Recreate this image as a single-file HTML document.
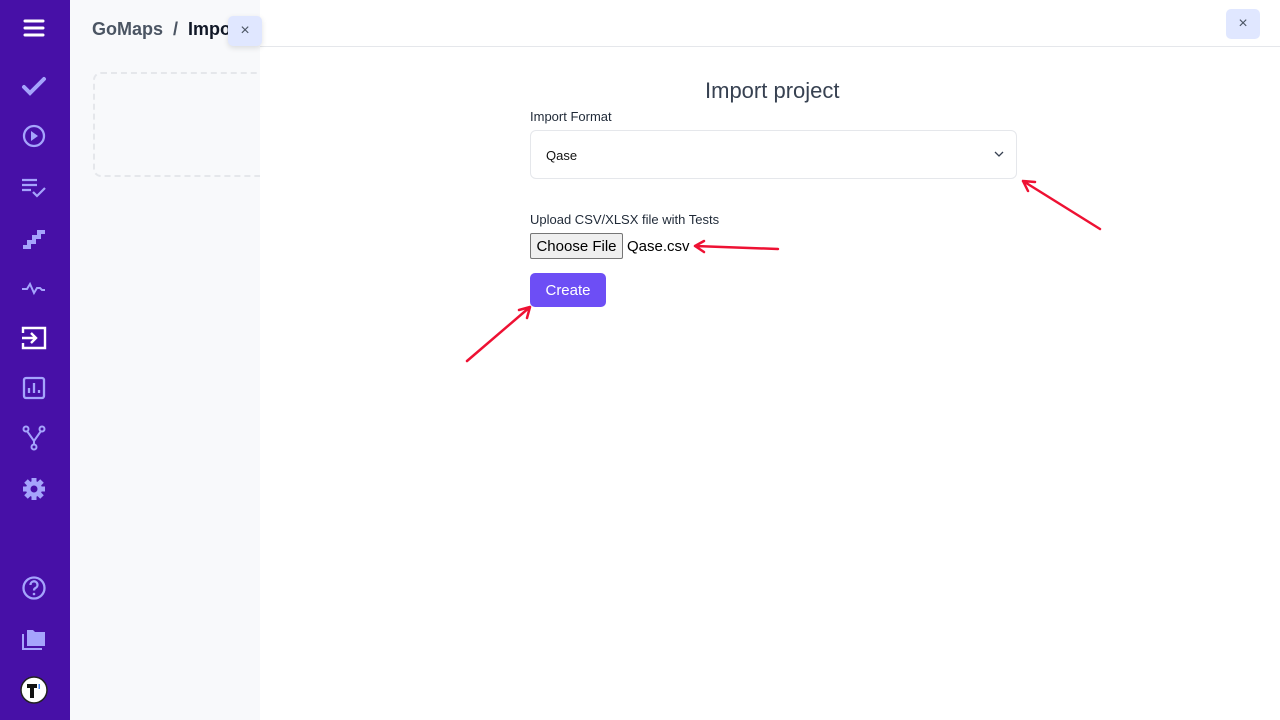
<!DOCTYPE html>
<html><head><meta charset="utf-8"><style>
*{box-sizing:border-box;margin:0;padding:0}
body{width:1280px;height:720px;overflow:hidden;background:#fff;font-family:"Liberation Sans",Arial,sans-serif;position:relative}
.sb{position:absolute;left:0;top:0;width:70px;height:720px;background:#4710a7}
.sb svg{position:absolute;left:21px;width:26px;height:26px}
.lp{position:absolute;left:70px;top:0;width:190px;height:720px;background:#f8f9fb}
.crumb{position:absolute;left:92px;top:19px;font-size:18px;font-weight:bold;color:#4b5563;white-space:nowrap;width:140px;overflow:hidden}
.crumb b{color:#111827}
.dash{position:absolute;left:93px;top:72px;width:175px;height:105px;border:2px dashed #e5e7eb;border-radius:8px}
.main{position:absolute;left:260px;top:0;width:1020px;height:720px;background:#fff}
.hline{position:absolute;left:260px;top:46px;width:1020px;height:1px;background:#e5e7eb}
.xbtn{position:absolute;width:34px;height:30px;background:#e0e7ff;border-radius:5px;color:#4b5563;font-size:16px;text-align:center;line-height:30px}
h1{position:absolute;left:705px;top:78px;font-size:22px;font-weight:normal;color:#374151}
.lbl{position:absolute;left:530px;font-size:13px;color:#1f2937}
.sel{position:absolute;left:530px;top:130px;width:487px;height:49px;border:1px solid #e5e7eb;border-radius:6px;font-size:13px;padding:17px 15px;color:#111}
.cf{position:absolute;left:530px;top:233px;width:93px;height:26px;background:#efefef;border:1px solid #767676;border-radius:2px;font-size:15px;line-height:25px;text-align:center;color:#000}
.fn{position:absolute;left:627px;top:238px;font-size:15px;color:#000}
.btn{position:absolute;left:530px;top:273px;width:76px;height:34px;background:#6d4ef5;border-radius:5px;color:#fff;font-size:15px;text-align:center;line-height:35px}
</style></head><body>
<div class="lp"></div>
<div class="crumb">GoMaps &nbsp;/&nbsp; <b>Import</b></div>
<div class="dash"></div>
<div class="main"></div>
<div class="hline"></div>
<div class="xbtn" style="left:228px;top:16px;box-shadow:0 2px 6px rgba(0,0,0,.12)">×</div>
<div class="xbtn" style="left:1226px;top:9px">×</div>
<div class="sb">
<svg style="top:15px" viewBox="0 0 26 26"><path d="M4 6h18M4 13h18M4 20h18" stroke="#fff" stroke-width="3" stroke-linecap="round"/></svg>
<svg style="top:73px" viewBox="0 0 26 26"><path d="M3 14l6 6L23 6" stroke="#a5a4fc" stroke-width="4" fill="none" stroke-linecap="round"/></svg>
<svg style="top:123px" viewBox="0 0 26 26"><circle cx="13" cy="13" r="10" stroke="#a5a4fc" stroke-width="2.3" fill="none"/><path d="M10 8l7 5-7 5z" fill="#a5a4fc"/></svg>
<svg style="top:174px" viewBox="0 0 26 26"><path d="M1 6h15M1 11h15M1 16h9M12 18l4 4 8-8" stroke="#a5a4fc" stroke-width="2.2" fill="none"/></svg>
<svg style="top:225px" viewBox="0 0 26 26"><path d="M2 22h6v-5h5v-5h5V7h6" stroke="#a5a4fc" stroke-width="4" fill="none"/></svg>
<svg style="top:275px" viewBox="0 0 26 26"><path d="M1 14h5l3-5 4 9 3-5h3l2 2h3" stroke="#a5a4fc" stroke-width="2" fill="none"/></svg>
<svg style="top:325px" viewBox="0 0 26 26"><path d="M2 8V3h22v20H2v-5M1 13h13M10 8l5 5-5 5" stroke="#fff" stroke-width="2.4" fill="none"/></svg>
<svg style="top:375px" viewBox="0 0 26 26"><rect x="3" y="3" width="20" height="20" rx="2" stroke="#a5a4fc" stroke-width="2.3" fill="none"/><path d="M8 18v-5M13 18V8M18 18v-3" stroke="#a5a4fc" stroke-width="2.3"/></svg>
<svg style="top:425px" viewBox="0 0 26 26"><circle cx="5" cy="4" r="2.5" stroke="#a5a4fc" stroke-width="2" fill="none"/><circle cx="21" cy="4" r="2.5" stroke="#a5a4fc" stroke-width="2" fill="none"/><circle cx="13" cy="22" r="2.5" stroke="#a5a4fc" stroke-width="2" fill="none"/><path d="M6 6l7 10 7-10M13 16v3" stroke="#a5a4fc" stroke-width="2" fill="none"/></svg>
<svg style="top:476px" viewBox="0 0 26 26"><circle cx="13" cy="13" r="8" fill="#a5a4fc"/><path d="M13 2v22M2 13h22M5 5l16 16M21 5L5 21" stroke="#a5a4fc" stroke-width="5"/><circle cx="13" cy="13" r="3.5" fill="#4710a7"/></svg>
<svg style="top:575px" viewBox="0 0 26 26"><circle cx="13" cy="13" r="10.5" stroke="#a5a4fc" stroke-width="2.3" fill="none"/><path d="M9.5 10a3.5 3.5 0 1 1 5 3c-1.2.6-1.5 1.3-1.5 2.5" stroke="#a5a4fc" stroke-width="2.3" fill="none"/><circle cx="13" cy="19" r="1.3" fill="#a5a4fc"/></svg>
<svg style="top:625px" viewBox="0 0 26 26"><path d="M6 5h6l2 2h10v14H6z" fill="#a5a4fc"/><path d="M2 9v15h19" stroke="#a5a4fc" stroke-width="2" fill="none"/></svg>
<svg style="top:676px;left:20px;width:28px;height:28px" viewBox="0 0 28 28"><circle cx="14" cy="14" r="13" fill="#fff" stroke="#222" stroke-width="1.5"/><path d="M7 8h10v4h-3v10h-4V12H7z" fill="#111"/><path d="M18.5 8h1.5v5h-1.5z" fill="#3b82f6"/></svg>
</div>
<h1>Import project</h1>
<div class="lbl" style="top:109px">Import Format</div>
<div class="sel">Qase<svg style="position:absolute;right:12px;top:20px" width="10" height="7" viewBox="0 0 10 7"><path d="M1 1l4 4 4-4" stroke="#374151" stroke-width="1.3" fill="none"/></svg></div>
<div class="lbl" style="top:212px">Upload CSV/XLSX file with Tests</div>
<div class="cf">Choose File</div>
<div class="fn">Qase.csv</div>
<div class="btn">Create</div>
<svg style="position:absolute;left:0;top:0" width="1280" height="720">
<g stroke="#ee1133" stroke-width="2.5" fill="none" stroke-linecap="round">
<path d="M1100 229L1023 181M1023 181l12 1M1023 181l5 10"/>
<path d="M778 249L695 246M695 246l9-5M695 246l9 6"/>
<path d="M467 361L530 307M530 307l-11 3M530 307l-3 11"/>
</g></svg>
</body></html>
